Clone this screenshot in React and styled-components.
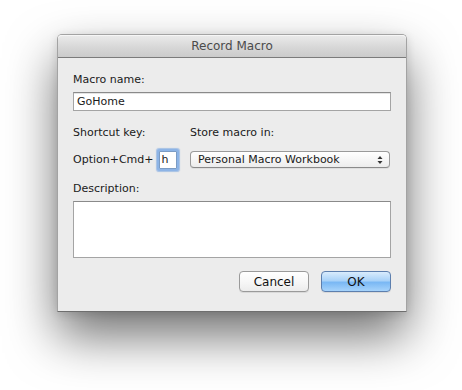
import React from 'react';
import styled, { createGlobalStyle } from 'styled-components';

const GlobalStyle = createGlobalStyle`
  html, body {
    margin: 0;
    padding: 0;
    background: #ffffff;
  }
  body {
    font-family: "DejaVu Sans", Verdana, sans-serif;
    font-size: 11px;
    color: #1a1a1a;
  }
`;

const Stage = styled.div`
  width: 462px;
  height: 390px;
  padding: 34px 0 0 57px;
  box-sizing: border-box;
  overflow: hidden;
`;

const Window = styled.div`
  width: 350px;
  height: 278px;
  box-sizing: border-box;
  background: #ececec;
  border: 1px solid #a3a3a3;
  border-bottom-color: #6e6e6e;
  border-radius: 5px 5px 0 0;
  box-shadow: 0 24px 50px rgba(0, 0, 0, 0.56), 0 2px 10px rgba(0, 0, 0, 0.12);
  display: flex;
  flex-direction: column;
`;

const TitleBar = styled.div`
  height: 22px;
  flex: none;
  display: flex;
  align-items: center;
  justify-content: center;
  background: linear-gradient(#ebebeb, #d6d6d6 60%, #cbcbcb);
  border-bottom: 1px solid #7b7b7b;
  border-radius: 4px 4px 0 0;
  font-size: 12px;
  color: #4b4b4b;
  box-shadow: inset 0 1px 0 #f6f6f6;
`;

const Body = styled.div`
  flex: 1;
  display: flex;
  flex-direction: column;
  padding: 15px 15px 0 15px;
`;

const Label = styled.div`
  height: 14px;
  line-height: 14px;
  margin-top: ${p => p.$top || 0}px;
`;

const TextField = styled.div`
  height: 19px;
  box-sizing: border-box;
  margin-top: 5px;
  background: #fff;
  border: 1px solid #a4a4a4;
  border-top-color: #8a8a8a;
  padding: 0 3px;
  line-height: 17px;
  box-shadow: inset 0 1px 0 #e4e4e4;
`;

const Grid = styled.div`
  display: grid;
  grid-template-columns: 117px 1fr;
  grid-template-rows: 14px 23px;
  row-gap: 8px;
  margin-top: 15px;
`;

const ShortcutRow = styled.div`
  display: flex;
  align-items: center;
`;

const KeyField = styled.div`
  width: 18px;
  height: 18px;
  box-sizing: border-box;
  margin-left: 5px;
  background: #fff;
  border: 1px solid #7c9cc4;
  box-shadow: 0 0 0 2px #8db4e6, 0 0 1px 3px rgba(120, 165, 225, 0.6);
  border-radius: 1px;
  padding-left: 2px;
  line-height: 16px;
`;

const Popup = styled.div`
  align-self: center;
  height: 17px;
  box-sizing: border-box;
  margin-right: 1px;
  border: 1px solid #9a9a9a;
  border-bottom-color: #8a8a8a;
  border-radius: 4px;
  background: linear-gradient(#ffffff, #f6f6f6 50%, #ececec);
  box-shadow: 0 1px 0 rgba(0, 0, 0, 0.06);
  display: flex;
  align-items: center;
  justify-content: space-between;
  padding: 0 6px 0 7px;
  line-height: 15px;
`;

const Arrows = styled.svg`
  width: 6px;
  height: 10px;
  flex: none;
`;

const TextArea = styled.div`
  height: 57px;
  box-sizing: border-box;
  margin-top: 5px;
  background: #fff;
  border: 1px solid #a4a4a4;
  border-top-color: #8a8a8a;
`;

const Buttons = styled.div`
  display: flex;
  justify-content: flex-end;
  gap: 12px;
  margin-top: 13px;
`;

const Button = styled.div`
  width: 70px;
  height: 21px;
  box-sizing: border-box;
  display: flex;
  align-items: center;
  justify-content: center;
  font-size: 12px;
  border-radius: 4px;
  color: #111;
  border: 1px solid ${p => (p.$primary ? '#5d7fae' : '#9a9a9a')};
  background: ${p =>
    p.$primary
      ? 'linear-gradient(#d9ecfd, #a9d2f8 45%, #7ab8f4 55%, #a6d3fb)'
      : 'linear-gradient(#ffffff, #f7f7f7 50%, #ececec)'};
  box-shadow: 0 1px 0 rgba(0, 0, 0, 0.08);
`;

const App = () => (
  <>
    <GlobalStyle />
    <Stage>
      <Window>
        <TitleBar>Record Macro</TitleBar>
        <Body>
          <Label>Macro name:</Label>
          <TextField>GoHome</TextField>
          <Grid>
            <Label>Shortcut key:</Label>
            <Label>Store macro in:</Label>
            <ShortcutRow>
              Option+Cmd+
              <KeyField>h</KeyField>
            </ShortcutRow>
            <Popup>
              Personal Macro Workbook
              <Arrows viewBox="0 0 6 10">
                <path d="M0.5 4 L3 1 L5.5 4 Z" fill="#333" />
                <path d="M0.5 6 L3 9 L5.5 6 Z" fill="#333" />
              </Arrows>
            </Popup>
          </Grid>
          <Label $top={11}>Description:</Label>
          <TextArea />
          <Buttons>
            <Button>Cancel</Button>
            <Button $primary>OK</Button>
          </Buttons>
        </Body>
      </Window>
    </Stage>
  </>
);

export default App;
